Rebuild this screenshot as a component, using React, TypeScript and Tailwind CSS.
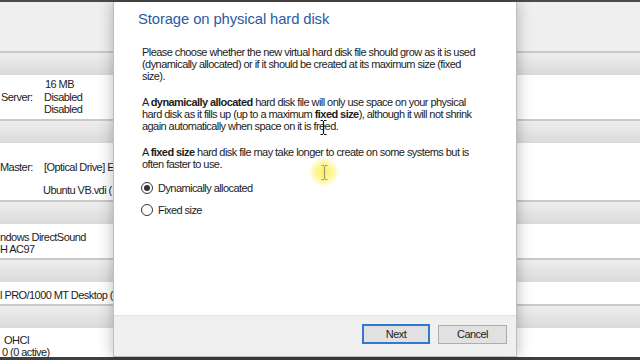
import React from 'react';

const txt = "font-['Liberation_Sans',Arial,sans-serif] text-[11px] tracking-[-0.56px] text-[#1c1c1c]";

const SectionHeader: React.FC = () => (
  <div className="flex flex-col">
    <div className="h-[2px] bg-[#c9c9c9]" />
    <div className="h-[22px] bg-gradient-to-b from-[#eeeeee] to-[#dadada]" />
  </div>
);

const Radio: React.FC<{ checked?: boolean; label: string }> = ({ checked, label }) => (
  <div className="flex items-center gap-[5px] h-[14px]">
    <div className="w-[12px] h-[12px] rounded-full border border-[#333] bg-white flex items-center justify-center">
      {checked && <div className="w-[6px] h-[6px] rounded-full bg-[#333]" />}
    </div>
    <span className={`${txt} leading-[14px]`}>{label}</span>
  </div>
);

const IBeam: React.FC<{ color?: string }> = ({ color = '#111' }) => (
  <svg width="7" height="15" viewBox="0 0 7 15">
    <path d="M0.5 0.5h2.5M4 0.5h2.5M3.5 1v13M0.5 14.5h2.5M4 14.5h2.5" stroke={color} strokeWidth="1.2" fill="none" />
  </svg>
);

const App: React.FC = () => {
  return (
    <div className="relative w-[640px] h-[360px] overflow-hidden bg-[#efefef]">
      {/* manager details behind the wizard */}
      <div className="flex flex-col">
        <div className="h-[2px] bg-[#4a4a4a]" />
        <div className="h-[49px] bg-[#efefef]" />
        <SectionHeader />
        <div className="h-[44px] bg-white pt-[3px] flex flex-col leading-[12.5px]">
          <div className={`${txt} pl-[45px]`}>16 MB</div>
          <div className={`${txt} flex`}><span className="w-[44px] pl-[1px]">Server:</span><span>Disabled</span></div>
          <div className={`${txt} pl-[44px]`}>Disabled</div>
        </div>
        <SectionHeader />
        <div className="h-[57px] bg-white pt-[18px] flex flex-col gap-[11px] leading-[12px]">
          <div className={`${txt} flex whitespace-nowrap`}><span className="w-[44px] shrink-0">Master:</span><span>[Optical Drive] E</span></div>
          <div className={`${txt} pl-[43px] whitespace-nowrap`}>Ubuntu VB.vdi (</div>
        </div>
        <SectionHeader />
        <div className="h-[34px] bg-white pt-[7px] flex flex-col leading-[12px]">
          <div className={`${txt} whitespace-nowrap`}>ndows DirectSound</div>
          <div className={`${txt} whitespace-nowrap`}>H AC97</div>
        </div>
        <SectionHeader />
        <div className="h-[22px] bg-white pt-[7px] leading-[12px]">
          <div className={`${txt} whitespace-nowrap`}>l PRO/1000 MT Desktop (</div>
        </div>
        <SectionHeader />
        <div className="h-[29px] bg-white pt-[6px] flex flex-col leading-[12px]">
          <div className={`${txt} pl-[4px]`}>OHCI</div>
          <div className={`${txt} pl-[2px]`}>0 (0 active)</div>
        </div>
        <div className="h-[3px] bg-[#3f3f3f]" />
      </div>

      {/* wizard dialog */}
      <div className="absolute left-[113px] top-[2px] w-[404px] h-[355px] bg-white border-x border-b border-[#bdbdbd] shadow-[0_0_14px_rgba(0,0,0,0.28)] flex flex-col">
        <div className="flex-1 flex flex-col">
          <h1 className="pl-[24px] pt-[7px] font-['Liberation_Sans',Arial,sans-serif] text-[14.8px] leading-[20px] tracking-[-0.1px] text-[#2a5aa3]">
            Storage on physical hard disk
          </h1>
          <div className={`${txt} pl-[28px] pt-[17px] leading-[12px] flex flex-col gap-[14px]`}>
            <p>
              Please choose whether the new virtual hard disk file should grow as it is used<br />
              (dynamically allocated) or if it should be created at its maximum size (fixed<br />
              size).
            </p>
            <p>
              A <b>dynamically allocated</b> hard disk file will only use space on your physical<br />
              hard disk as it fills up (up to a maximum <b>fixed size</b>), although it will not shrink<br />
              again automatically when space on it is freed.
            </p>
            <p>
              A <b>fixed size</b> hard disk file may take longer to create on some systems but is<br />
              often faster to use.
            </p>
          </div>
          <div className="pl-[27px] pt-[11px] flex flex-col gap-[8px]">
            <Radio checked label="Dynamically allocated" />
            <Radio label="Fixed size" />
          </div>
        </div>
        <div className="h-[41px] bg-[#f0f0f0] border-t border-[#e3e3e3] flex justify-end items-start gap-[8px] pt-[8px] pr-[9px]">
          <button className={`${txt} w-[68px] h-[20px] bg-[#e1e1e1] border-2 border-[#2f7ad0]`}>Next</button>
          <button className={`${txt} w-[69px] h-[19px] mt-[1px] bg-[#e1e1e1] border border-[#adadad]`}>Cancel</button>
        </div>
      </div>

      {/* cursor highlights */}
      <div className="absolute left-[320px] top-[120px]">
        <IBeam />
      </div>
      <div className="absolute left-[309px] top-[157px] w-[30px] h-[30px] rounded-full bg-[radial-gradient(circle,rgba(255,238,70,0.9)_0%,rgba(255,242,110,0.6)_45%,rgba(255,250,180,0)_72%)] flex items-center justify-center">
        <IBeam color="#9a9a80" />
      </div>
    </div>
  );
};

export default App;
